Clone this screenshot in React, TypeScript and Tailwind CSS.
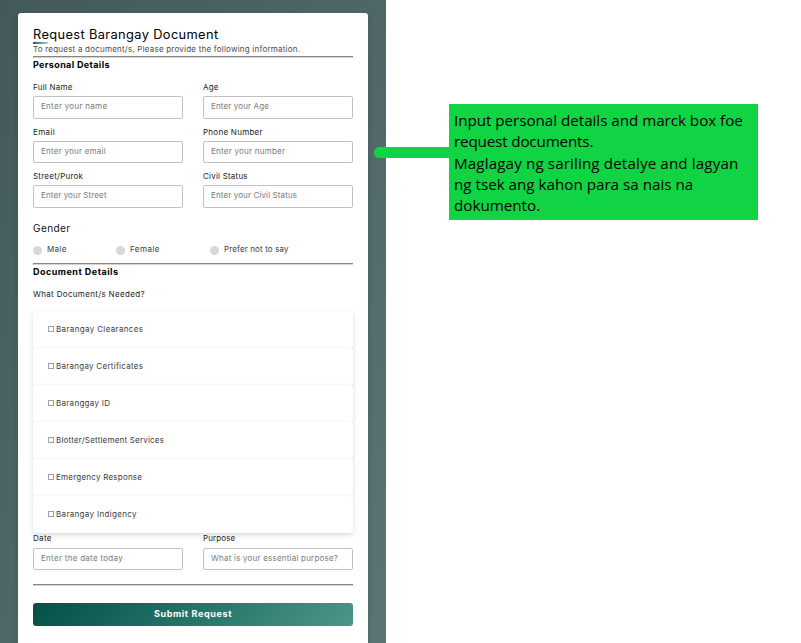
import type { ReactNode } from "react";

function Rule() {
  return <div className="h-[2px] border-t border-b border-l border-t-[#858585] border-b-[#d4d4d4] border-l-[#8c8c8c]" />;
}

function Field({ label, hint, labelClass, hintClass, boxClass = "h-[23px] pb-[3px]" }: {
  label: string; hint: string; labelClass: string; hintClass: string; boxClass?: string;
}) {
  return (
    <label className="flex w-[150px] flex-col">
      <span className={"h-[14px] text-[8px] leading-[14px] text-[#1c1c1c] " + labelClass}>{label}</span>
      <span className="h-[2px]" />
      <span className={"flex items-center rounded-[2px] border border-[#c2c2c2] bg-white px-[7px] text-[8px] leading-[12px] text-[#7a7a7a] " + boxClass + " " + hintClass}>
        {hint}
      </span>
    </label>
  );
}

function Row({ className, children }: { className: string; children: ReactNode }) {
  return <div className={"flex justify-between " + className}>{children}</div>;
}

function Radio({ label, className, textClass }: { label: string; className: string; textClass: string }) {
  return (
    <span className={"flex items-center gap-[5px] " + className}>
      <span className="mt-[3px] size-[9px] shrink-0 rounded-full bg-[#d8d8d8]" />
      <span className={"text-[8px] leading-[12px] text-[#3c3c3c] " + textClass}>{label}</span>
    </span>
  );
}

const documents = [
  { name: "Barangay Clearances", spacing: "tracking-[0.044em]" },
  { name: "Barangay Certificates", spacing: "tracking-[0.033em]" },
  { name: "Baranggay ID", spacing: "tracking-[0.036em]" },
  { name: "Blotter/Settlement Services", spacing: "tracking-[0.025em]" },
  { name: "Emergency Response", spacing: "tracking-[0.029em]" },
  { name: "Barangay Indigency", spacing: "tracking-[0.041em]" },
];

export default function App() {
  return (
    <div className="relative flex h-[643px] w-[801px] overflow-hidden bg-white font-['Inter',sans-serif] whitespace-nowrap">
      <div className="h-[643px] w-[386px] shrink-0 bg-linear-to-br from-[#43595c] to-[#5b7574] pt-[13px] pl-[18px]">
        <main className="flex h-[640px] w-[350px] flex-col rounded-t-[3px] bg-white px-[15px] pt-[15px] shadow-[0_3px_6px_rgba(0,0,0,0.15)]">
          <h1 className="h-[14px] text-[12.8px] leading-[14px] tracking-[0.03em] text-black">Request Barangay Document</h1>
          <div className="h-[2px] w-[15px] bg-linear-to-r from-[#1b6258] to-[#b4d0cc]" />
          <p className="h-[12px] text-[8px] leading-[10px] tracking-[0.027em] text-[#4b4b4b]">
            To request a document/s, Please provide the following information.
          </p>
          <Rule />
          <h2 className="h-[22px] text-[9px] leading-[14px] font-bold tracking-[0.04em] text-black">Personal Details</h2>
          <Row className="h-[44px]">
            <Field label="Full Name" hint="Enter your name" labelClass="tracking-[0.028em]" hintClass="tracking-[0.036em]" />
            <Field label="Age" hint="Enter your Age" labelClass="tracking-[0.026em]" hintClass="tracking-[0.017em]" />
          </Row>
          <Row className="h-[45px] pt-px">
            <Field label="Email" hint="Enter your email" labelClass="tracking-[0.047em]" hintClass="tracking-[0.029em]" boxClass="h-[22px] pb-[2px]" />
            <Field label="Phone Number" hint="Enter your number" labelClass="tracking-[0.033em]" hintClass="tracking-[0.03em]" boxClass="h-[22px] pb-[2px]" />
          </Row>
          <Row className="h-[52px]">
            <Field label="Street/Purok" hint="Enter your Street" labelClass="tracking-[0.03em]" hintClass="tracking-[0.014em]" />
            <Field label="Civil Status" hint="Enter your Civil Status" labelClass="tracking-[0.026em]" hintClass="tracking-[0.015em]" />
          </Row>
          <h3 className="h-[22px] text-[10px] leading-[14px] tracking-[0.042em] text-[#101010]">Gender</h3>
          <div className="flex h-[20px] items-start">
            <Radio label="Male" className="w-[83px]" textClass="tracking-[0.041em]" />
            <Radio label="Female" className="w-[94px]" textClass="tracking-[0.058em]" />
            <Radio label="Prefer not to say" className="" textClass="tracking-[0.017em]" />
          </div>
          <Rule />
          <h2 className="h-[22px] text-[9px] leading-[14px] font-bold tracking-[0.053em] text-black">Document Details</h2>
          <p className="h-[24px] text-[8px] leading-[14px] tracking-[0.042em] text-[#1c1c1c]">What Document/s Needed?</p>
          <ul className="h-[220px]">
            {documents.map((d) => (
              <li key={d.name} className="flex h-[37px] items-center gap-[2px] rounded-[3px] bg-white pl-[15px] shadow-[0_2px_5px_rgba(0,0,0,0.15)]">
                <span className="mb-[2px] size-[6px] border border-[#a0a0a0]" />
                <span className={"pb-[2px] text-[8px] leading-[12px] text-[#3c3c3c] " + d.spacing}>{d.name}</span>
              </li>
            ))}
          </ul>
          <Row className="relative h-[53px]">
            <Field label="Date" hint="Enter the date today" labelClass="tracking-[0.043em]" hintClass="tracking-[0.036em]" boxClass="mt-px h-[22px] pb-[2px]" />
            <Field label="Purpose" hint="What is your essential purpose?" labelClass="tracking-[0.015em]" hintClass="tracking-[0.026em]" boxClass="mt-px h-[22px] pb-[2px]" />
          </Row>
          <Rule />
          <button className="mt-[17px] flex h-[23px] shrink-0 items-center justify-center rounded-[3px] bg-linear-[135deg] from-[#025146] to-[#4a968a] pb-px text-[9px] font-bold tracking-[0.07em] text-white">
            Submit Request
          </button>
        </main>
      </div>
      <div className="absolute top-[147px] left-[374px] h-[11px] w-[80px] rounded-l-full bg-[#11d445]" />
      <aside className="relative mt-[104px] ml-[63px] h-[116px] w-[309px] bg-[#11d445] pt-[6px] pl-[5px] font-['Open_Sans',sans-serif] text-[15.2px] leading-[21.3px] text-black">
        <p className="tracking-[-0.002em]">Input personal details and marck box foe</p>
        <p className="tracking-[-0.01em]">request documents.</p>
        <p className="tracking-[0.008em]">Maglagay ng sariling detalye and lagyan</p>
        <p>ng tsek ang kahon para sa nais na</p>
        <p>dokumento.</p>
      </aside>
    </div>
  );
}
